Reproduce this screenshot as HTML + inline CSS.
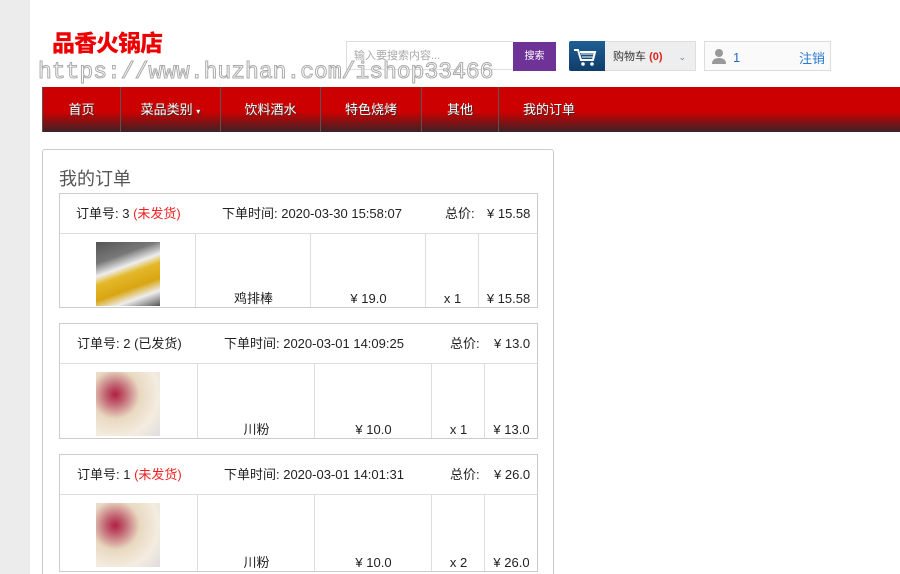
<!DOCTYPE html><html style="overflow:hidden"><head><meta charset="utf-8"><style>
html,body{margin:0;width:900px;height:574px;overflow:hidden}
body{background:#fff;font-family:"Liberation Sans","Noto Sans CJK SC",sans-serif;position:relative}
.a{position:absolute}
.strip{left:0;top:0;width:30px;height:574px;background:#ececec}
.logo{left:52px;top:24px;font-size:23px;font-weight:900;color:#e00;font-family:"Noto Sans CJK SC",sans-serif;letter-spacing:-1px}
.wm{left:38px;top:59px;font-family:"Liberation Mono",monospace;font-size:23px;color:#fff;-webkit-text-stroke:1px #aaa;z-index:5;line-height:26px}
.nav{left:42px;top:87px;width:858px;height:45px;background:linear-gradient(#cc0000 0,#cc0000 55%,#3d2226 100%);border-left:1px solid #555}
.nav div{position:absolute;top:0;height:45px;line-height:46px;color:#fff;font-size:13px;text-align:center;border-right:1px solid #555;text-shadow:1px 1px 1px #333}
.panel{left:42px;top:149px;width:510px;height:440px;border:1px solid #ccc;border-radius:3px}
.box{position:absolute;left:59px;width:477px;border:1px solid #ccc;font-size:13px;color:#222}
.hd{position:absolute;top:0;height:39px;line-height:40px;left:0;right:0;border-bottom:1px solid #ddd}
.hd span{position:absolute}
.c{position:absolute;top:40px;bottom:0;border-left:1px solid #ddd;text-align:center}
.c span{position:absolute;bottom:0;left:0;right:0;line-height:16px}
.red{color:#e22}
</style></head><body>
<div class="a strip"></div>
<div class="a logo">品香火锅店</div>
<div class="a" style="left:346px;top:41px;width:167px;height:29px;border:1px solid #ddd;border-right:none;font-size:11px;color:#aaa;line-height:29px;padding-left:7px;box-sizing:border-box">输入要搜索内容...</div>
<div class="a" style="left:513px;top:42px;width:43px;height:29px;background:#6f3398;color:#fff;font-size:10px;text-align:center;line-height:29px">搜索</div>
<div class="a" style="left:569px;top:41px;width:36px;height:30px;background:linear-gradient(#1f5f95,#0f3d6a);border-radius:2px 0 0 2px">
<svg width="36" height="30"><path d="M5 9h4l3 10h12l2-8H11" fill="none" stroke="#fff" stroke-width="2"/><path d="M12 13h13M13 16h11" stroke="#fff"/><circle cx="14" cy="23" r="1.8" fill="#fff"/><circle cx="23" cy="23" r="1.8" fill="#fff"/></svg></div>
<div class="a" style="left:605px;top:41px;width:91px;height:30px;background:#eee;border:1px solid #ddd;border-left:none;box-sizing:border-box;font-size:11px;line-height:30px;padding-left:8px;color:#333">购物车 <b style="color:#d22">(0)</b><span style="position:absolute;right:9px;color:#58a;font-size:9px">&#8964;</span></div>
<div class="a" style="left:704px;top:41px;width:127px;height:30px;border:1px solid #ddd;box-sizing:border-box;background:#fafafa">
<svg class="a" style="left:6px;top:6px" width="16" height="16"><circle cx="8" cy="5" r="4" fill="#999"/><path d="M1 16q0-6 7-6t7 6z" fill="#999"/></svg>
<span class="a" style="left:28px;top:8px;font-size:13px;color:#2a6ac0">1</span>
<span class="a" style="left:94px;top:6px;font-size:13px;color:#2a7ad0">注销</span></div>
<div class="a wm">https://www.huzhan.com/ishop33466</div>
<div class="a nav">
<div style="left:0;width:77px">首页</div>
<div style="left:78px;width:99px">菜品类别 <span style="font-size:8px">▾</span></div>
<div style="left:178px;width:99px">饮料酒水</div>
<div style="left:278px;width:100px">特色烧烤</div>
<div style="left:379px;width:76px">其他</div>
<div style="left:456px;width:100px;border:none">我的订单</div>
</div>
<div class="a panel"></div>
<div class="a" style="left:59px;top:165px;font-size:18px;color:#555">我的订单</div>

<div class="box" style="top:193px;height:113px">
<div class="hd"><span style="left:16px">订单号: 3 <span class="red" style="position:static">(未发货)</span></span><span style="left:162px">下单时间: 2020-03-30 15:58:07</span><span style="left:385px">总价:</span><span style="left:427px">¥ 15.58</span></div>
<div class="c" style="left:0;width:135px;border:none"><div style="position:absolute;left:36px;top:8px;width:64px;height:64px;background:linear-gradient(160deg,#555 0,#777 25%,#eee 40%,#e4b82a 50%,#d9a512 68%,#eee 82%,#555 100%)"></div></div>
<div class="c" style="left:135px;width:115px"><span>鸡排棒</span></div>
<div class="c" style="left:250px;width:115px"><span>¥ 19.0</span></div>
<div class="c" style="left:365px;width:53px"><span>x 1</span></div>
<div class="c" style="left:418px;width:59px"><span>¥ 15.58</span></div>
</div>

<div class="box" style="top:323px;height:114px">
<div class="hd"><span style="left:17px">订单号: 2 (已发货)</span><span style="left:164px">下单时间: 2020-03-01 14:09:25</span><span style="left:390px">总价:</span><span style="left:434px">¥ 13.0</span></div>
<div class="c" style="left:0;width:137px;border:none"><div style="position:absolute;left:36px;top:8px;width:64px;height:64px;background:radial-gradient(circle at 30% 35%,#b02040 0,#c06070 15%,#e8d8c0 40%,#f4ece0 70%,#ddd 100%)"></div></div>
<div class="c" style="left:137px;width:117px"><span>川粉</span></div>
<div class="c" style="left:254px;width:117px"><span>¥ 10.0</span></div>
<div class="c" style="left:371px;width:53px"><span>x 1</span></div>
<div class="c" style="left:424px;width:53px"><span>¥ 13.0</span></div>
</div>

<div class="box" style="top:454px;height:116px">
<div class="hd"><span style="left:17px">订单号: 1 <span class="red" style="position:static">(未发货)</span></span><span style="left:164px">下单时间: 2020-03-01 14:01:31</span><span style="left:390px">总价:</span><span style="left:434px">¥ 26.0</span></div>
<div class="c" style="left:0;width:137px;border:none"><div style="position:absolute;left:36px;top:8px;width:64px;height:64px;background:radial-gradient(circle at 30% 35%,#b02040 0,#c06070 15%,#e8d8c0 40%,#f4ece0 70%,#ddd 100%)"></div></div>
<div class="c" style="left:137px;width:117px"><span>川粉</span></div>
<div class="c" style="left:254px;width:117px"><span>¥ 10.0</span></div>
<div class="c" style="left:371px;width:53px"><span>x 2</span></div>
<div class="c" style="left:424px;width:53px"><span>¥ 26.0</span></div>
</div>
</body></html>
